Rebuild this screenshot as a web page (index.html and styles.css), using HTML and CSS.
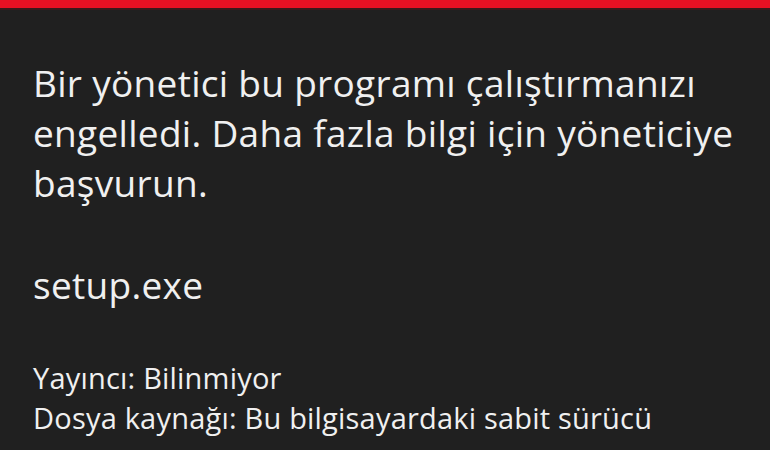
FILE: index.html
```html
<!DOCTYPE html>
<html lang="tr">
<head>
<meta charset="utf-8">
<link rel="stylesheet" href="styles.css">
</head>
<body>
<div class="topbar"></div>
<main class="content">
  <p class="message">Bir yönetici bu programı çalıştırmanızı engelledi. Daha fazla bilgi için yöneticiye başvurun.</p>
  <p class="filename">setup.exe</p>
  <div class="details">
    <p class="detail">Yayıncı: Bilinmiyor</p>
    <p class="detail">Dosya kaynağı: Bu bilgisayardaki sabit sürücü</p>
  </div>
</main>
</body>
</html>
```

FILE: styles.css
```css
html, body {
  margin: 0;
  padding: 0;
  background: #202020;
  width: 770px;
  height: 450px;
  overflow: hidden;
}
body {
  font-family: "Open Sans", "Noto Sans", "DejaVu Sans", sans-serif;
  color: #f0f0f0;
}
.topbar {
  height: 8px;
  background: #e81123;
  border-bottom: 2px solid #3a1a1c;
}
.content {
  padding: 0 0 0 33px;
}
.message {
  margin: 0;
  padding-top: 48px;
  font-size: 37px;
  line-height: 50px;
  letter-spacing: 0.3px;
  width: 730px;
}
.filename {
  margin: 0;
  padding-top: 52px;
  font-size: 37px;
  line-height: 50px;
  letter-spacing: 0.3px;
}
.details {
  padding-top: 48px;
}
.detail {
  margin: 0;
  font-size: 29px;
  line-height: 40px;
  letter-spacing: 0.2px;
  white-space: nowrap;
}
```
